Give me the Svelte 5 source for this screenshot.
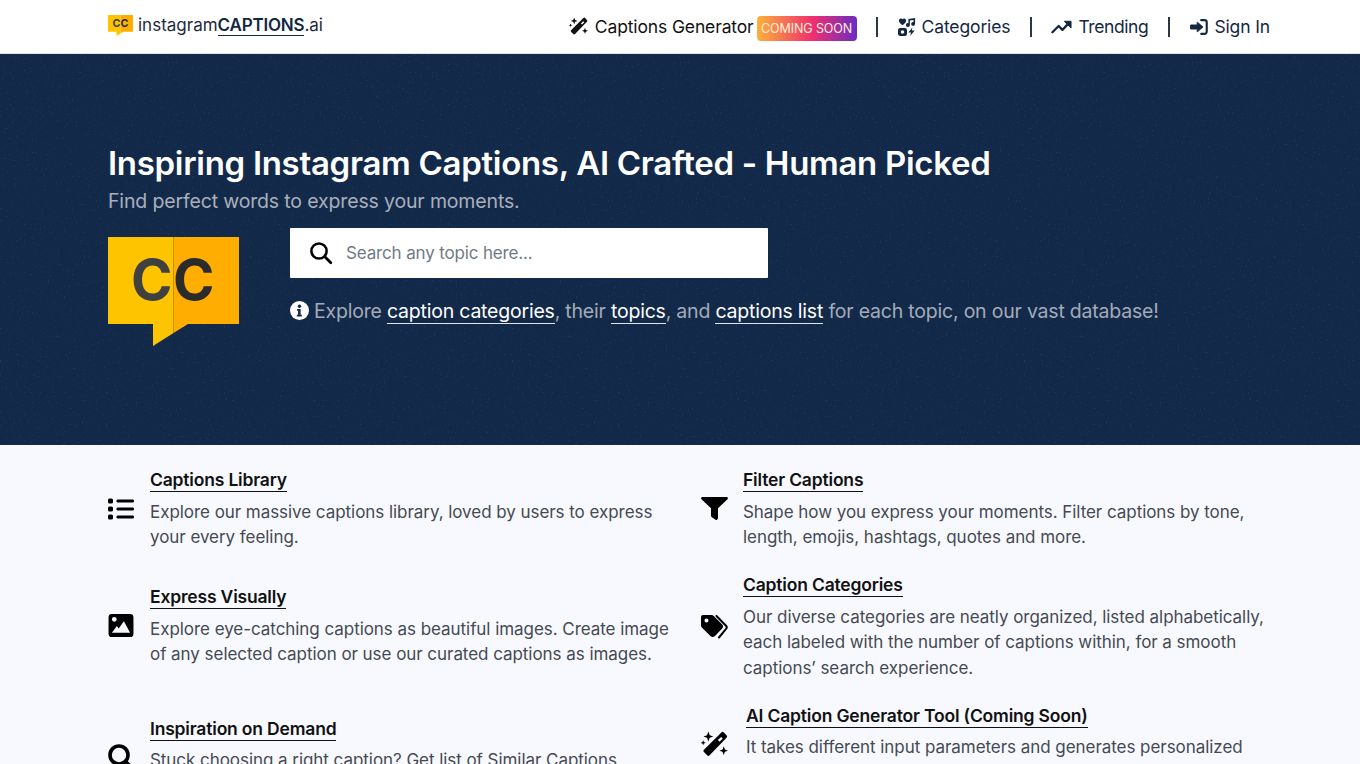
<script>
  const left = [
    { title: 'Captions Library', text: 'Explore our massive captions library, loved by users to express your every feeling.', icon: 'list', cls: 'l1' },
    { title: 'Express Visually', text: 'Explore eye-catching captions as beautiful images. Create image of any selected caption or use our curated captions as images.', icon: 'image', cls: 'l2' },
    { title: 'Inspiration on Demand', text: 'Stuck choosing a right caption? Get list of Similar Captions\nfor any caption you like.', icon: 'search', cls: 'l3' }
  ];
  const right = [
    { title: 'Filter Captions', text: 'Shape how you express your moments. Filter captions by tone, length, emojis, hashtags, quotes and more.', icon: 'filter', cls: 'r1' },
    { title: 'Caption Categories', text: 'Our diverse categories are neatly organized, listed alphabetically, each labeled with the number of captions within, for a smooth captions’ search experience.', icon: 'tags', cls: 'r2' },
    { title: 'AI Caption Generator Tool (Coming Soon)', text: 'It takes different input parameters and generates personalized\ncaptions for you.', icon: 'wand', cls: 'r3' }
  ];
</script>

{#snippet wand()}
  <svg class="ico" viewBox="1 1 22 22" width="19" height="19"><path d="M17.600 2.200a1.400 1.400 0 0 1 2 0l2.200 2.200a1.400 1.400 0 0 1 0 2L8 20.800a1.400 1.400 0 0 1-2 0l-2.600-2.600a1.400 1.400 0 0 1 0-2Zm-.2 3.600-2.600 2.600 1.300 1.300 2.600-2.600Z" fill="currentColor" fill-rule="evenodd"/><path d="M7 1.500l1.100 2.900 2.900 1.100-2.900 1.100L7 9.500 5.900 6.600 3 5.500l2.900-1.100ZM19.500 13.500l1 2.500 2.500 1-2.500 1-1 2.500-1-2.500-2.500-1 2.500-1ZM2.800 8.500l.6 1.500 1.500.6-1.500.6-.6 1.500-.6-1.500-1.500-.6 1.500-.6Z" fill="currentColor"/></svg>
{/snippet}

{#snippet icon(name)}
  {#if name === 'list'}
    <svg class="f-ico" viewBox="0 0 26 22" width="26" height="22"><g fill="currentColor"><rect x="0" y="0.500" width="5" height="5" rx="1.500"/><rect x="0" y="8.500" width="5" height="5" rx="1.500"/><rect x="0" y="16.500" width="5" height="5" rx="1.500"/><rect x="8.500" y="1.500" width="17.500" height="3" rx="1.300"/><rect x="8.500" y="9.500" width="17.500" height="3" rx="1.300"/><rect x="8.500" y="17.500" width="17.500" height="3" rx="1.300"/></g></svg>
  {:else if name === 'image'}
    <svg class="f-ico" viewBox="0 0 26 24" width="26" height="23"><path fill-rule="evenodd" fill="currentColor" d="M3.500 0h19A3.500 3.500 0 0 1 26 3.500v17a3.500 3.500 0 0 1-3.500 3.500h-19A3.500 3.500 0 0 1 0 20.500v-17A3.500 3.500 0 0 1 3.500 0ZM6 3a2.500 2.500 0 1 0 0 5 2.500 2.500 0 0 0 0-5Zm10 4.500L10.600 15 8.700 12.600 3.500 19.500h19Z"/></svg>
  {:else if name === 'search'}
    <svg class="f-ico" viewBox="0 0 26 26" width="26" height="26"><circle cx="11" cy="11" r="9" fill="none" stroke="currentColor" stroke-width="3.600"/><path d="M17.500 17.500 24 24" stroke="currentColor" stroke-width="3.600" stroke-linecap="round"/></svg>
  {:else if name === 'filter'}
    <svg class="f-ico" viewBox="0 0 27 23" width="27" height="23"><path fill="currentColor" d="M1.500 0h24c1.300 0 1.900 1.400 1 2.300L17 11.200V21a1.500 1.500 0 0 1-.6 1.300 1.500 1.500 0 0 1-2.300.2l-3.500-2.500a1.500 1.500 0 0 1-.6-1.200v-7.600L.5 2.300C-.4 1.400.2 0 1.500 0Z"/></svg>
  {:else if name === 'tags'}
    <svg class="f-ico" viewBox="0 0 27 24" width="27" height="24"><path fill="currentColor" fill-rule="evenodd" d="M2 0h8.500c.8 0 1.500.3 2 .8l8.700 8.700c1.100 1.100 1.100 2.900 0 4l-7.500 7.700c-1.100 1.100-2.900 1.100-4 0L.8 12.500c-.5-.5-.8-1.200-.8-2V2a2 2 0 0 1 2-2Zm3.500 3.500a2 2 0 1 0 0 4 2 2 0 0 0 0-4Z"/><path fill="none" stroke="currentColor" stroke-width="2" stroke-linecap="round" d="m15.500 1 9.500 9.700c1.100 1.100 1.100 2.100 0 3.200L18 22.500"/></svg>
  {:else if name === 'wand'}
    <span class="wand-big">{@render wand()}</span>
  {/if}
{/snippet}

{#snippet feature(f)}
  <article class="feature {f.cls}">
    <span class="f-icon">{@render icon(f.icon)}</span>
    <div class="f-body">
      <h3><a href="#top">{f.title}</a></h3>
      <p>{f.text}</p>
    </div>
  </article>
{/snippet}

{#snippet logo(w, h)}
  <svg viewBox="0 0 131 109" width={w} height={h} aria-label="CC logo">
    <defs>
      <clipPath id="cl-{w}"><rect x="0" y="0" width="65.500" height="109"/></clipPath>
      <clipPath id="cr-{w}"><rect x="65.500" y="0" width="65.500" height="109"/></clipPath>
    </defs>
    <path d="M0 0H65.500V96.100L45 109V87H0Z" fill="#ffc400"/>
    <path d="M65.500 0H131V87H80L65.500 96.100Z" fill="#ffae00"/>
    <text class="logo-cc" x="65" y="63" text-anchor="middle" fill="#404040" clip-path="url(#cl-{w})">CC</text>
    <text class="logo-cc" x="65" y="63" text-anchor="middle" fill="#2b2b2b" clip-path="url(#cr-{w})">CC</text>
  </svg>
{/snippet}

<div class="page" id="top">
  <header class="nav">
    <a class="brand" href="#top">
      {@render logo(25, 21)}
      <span class="brand-text">instagram<b>CAPTIONS</b>.ai</span>
    </a>
    <nav class="links">
      <a class="link gen" href="#top">{@render wand()}<span>Captions Generator</span><span class="badge">COMING SOON</span></a>
      <i class="sep"></i>
      <a class="link cats" href="#top">
        <svg class="ico" viewBox="0 0 20 20" width="18" height="18"><g fill="currentColor"><path d="M5 1.300C6 0 8.500.500 9 2.500c.3 1.800-1.500 4-4 5.500-2.500-1.500-4.300-3.700-4-5.500C1.500.500 4 0 5 1.300Z"/><path d="M11.500 1 19 0v6.500a2.200 2.200 0 1 1-1.800-2.100V2.200l-4 .6v5a2.200 2.200 0 1 1-1.700-2.100Z"/><path fill-rule="evenodd" d="M2.500 11h5A2.500 2.500 0 0 1 10 13.500v4A2.500 2.500 0 0 1 7.500 20h-5A2.500 2.500 0 0 1 0 17.500v-4A2.500 2.500 0 0 1 2.500 11Zm2.500 2.500a2 2 0 1 0 0 4 2 2 0 0 0 0-4Z"/><path d="M16 10.500 11.500 16h3l-1 4 5-6h-3.200Z"/></g></svg>
        <span>Categories</span>
      </a>
      <i class="sep sep-b"></i>
      <a class="link trend" href="#top">
        <svg class="ico" viewBox="0 0 22 14" width="21" height="14"><path d="M1.500 12.500 8 6l4 4 7-7.500" fill="none" stroke="currentColor" stroke-width="2.400" stroke-linecap="round" stroke-linejoin="round"/><path d="M14 1h7v7Z" fill="currentColor" stroke="currentColor" stroke-linejoin="round"/></svg>
        <span>Trending</span>
      </a>
      <i class="sep"></i>
      <a class="link" href="#top">
        <svg class="ico" viewBox="0 0 20 18" width="18" height="16"><path d="M8 3.500 14.500 9 8 14.500V11.300H1a1 1 0 0 1-1-1V7.700a1 1 0 0 1 1-1h7Z" fill="currentColor" stroke="currentColor" stroke-linejoin="round"/><path d="M12.500 1.300h3.700a2.500 2.500 0 0 1 2.500 2.500v10.400a2.500 2.500 0 0 1-2.500 2.500h-3.700" fill="none" stroke="currentColor" stroke-width="2.400" stroke-linecap="round"/></svg>
        <span>Sign In</span>
      </a>
    </nav>
  </header>

  <section class="hero">
    <svg class="grain" width="100%" height="100%" aria-hidden="true">
      <filter id="grain"><feTurbulence type="fractalNoise" baseFrequency="0.5" numOctaves="2" seed="4"/><feColorMatrix values="0 0 0 0 0.02  0 0 0 0 0.06  0 0 0 0 0.14  0 0 0 4 -2.55"/></filter>
      <rect width="100%" height="100%" filter="url(#grain)"/>
    </svg>
    <div class="hero-inner">
      <h1>Inspiring Instagram Captions, AI Crafted - Human Picked</h1>
      <p class="sub">Find perfect words to express your moments.</p>
      <div class="hero-row">
        <div class="hero-logo">{@render logo(131, 109)}</div>
        <div class="hero-main">
          <label class="search">
            <svg viewBox="0 0 24 24" width="24" height="24" class="s-ico"><circle cx="10" cy="10" r="7.600" fill="none" stroke="currentColor" stroke-width="2.500"/><path d="m15.800 15.800 6 6" stroke="currentColor" stroke-width="2.800" stroke-linecap="round"/></svg>
            <input type="text" placeholder="Search any topic here..." />
          </label>
          <p class="explore">
            <svg viewBox="0 0 20 20" width="19" height="19" class="i-ico"><circle cx="10" cy="10" r="10" fill="#fff"/><circle cx="10" cy="5.500" r="1.800" fill="#13294a"/><path d="M7.500 8.500h3.700v6h1.300v1.700h-5.300v-1.700h1.300v-4.300H7.500Z" fill="#13294a"/></svg>
            <span>Explore <a href="#top">caption categories</a>, their <a href="#top">topics</a>, and <a href="#top">captions list</a> for each topic, on our vast database!</span>
          </p>
        </div>
      </div>
    </div>
  </section>

  <section class="features">
    <div class="col col-l">
      {#each left as f}{@render feature(f)}{/each}
    </div>
    <div class="col col-r">
      {#each right as f}{@render feature(f)}{/each}
    </div>
  </section>
</div>

<style>
  :global(body) { margin: 0; overflow: hidden; background: #f8f9ff; }
  .page { height: 764px; overflow: hidden; font-family: Inter, "Noto Sans", sans-serif; color: #212529; }
  a { color: inherit; text-decoration: none; }

  .nav { height: 53px; display: flex; align-items: center; justify-content: space-between; padding: 0 90px 0 108px; background: #fff; border-bottom: 1px solid #dbe3ee; }
  .brand { display: flex; align-items: center; gap: 5px; margin-top: -3px; }
  .brand-text { font-size: 17px; letter-spacing: 0; color: #1f2a3a; }
  .brand-text b { font-weight: 600; color: #132743; border-bottom: 1px solid #132743; letter-spacing: -0.2px; }
  .links { display: flex; align-items: center; gap: 20px; color: #132743; }
  .link { display: flex; align-items: center; gap: 6px; font-size: 17.500px; letter-spacing: -0.13px; }
  .trend { letter-spacing: -0.4px; margin-left: -1px; }
  .gen { color: #111; margin-right: -1px; }
  .gen > span:first-of-type { margin-left: 1px; }
  .badge { margin: 4px 0 0 -3px; width: 100px; height: 25px; box-sizing: border-box; display: flex; align-items: center; justify-content: center; border-radius: 4px; font-size: 12.500px; letter-spacing: -0.1px; color: #fff0d8; background: linear-gradient(90deg, #fdb03a, #f0306f 55%, #6a2cc4); }
  .sep { flex: none; width: 2px; height: 20px; background: #2a3748; }
  .ico { flex: none; }

  .hero { position: relative; height: 391px; background: #13294a; }
  .grain { position: absolute; inset: 0; opacity: 0.7; }
  .hero-inner { position: relative; padding: 89px 90px 0 108px; }
  h1 { margin: 0; font-size: 33px; line-height: 40px; font-weight: 600; color: #fff; letter-spacing: -0.3px; }
  .sub { margin: 4px 0 0; font-size: 19.500px; line-height: 28px; color: #a9b0bb; letter-spacing: -0.15px; }
  .hero-row { display: flex; gap: 51px; margin-top: 13px; }
  .hero-logo { padding-top: 9px; }
  .hero-logo svg { display: block; }
  .logo-cc { font-family: Inter, sans-serif; font-weight: 700; font-size: 56px; letter-spacing: 0.5px; }
  .search { width: 478px; height: 50px; box-sizing: border-box; display: flex; align-items: center; gap: 11px; padding-left: 19px; background: #fff; border-radius: 1px; color: #000; }
  .s-ico { flex: none; }
  input { flex: 1; min-width: 0; border: 0; outline: 0; background: none; font: 400 17px Inter, sans-serif; letter-spacing: -0.15px; color: #222; }
  input::placeholder { color: #707a85; opacity: 1; }
  .explore { display: flex; align-items: center; gap: 5px; margin: 19px 0 0; font-size: 19.500px; line-height: 28px; letter-spacing: -0.21px; color: #a3abb8; white-space: nowrap; }
  .i-ico { flex: none; margin-top: -2px; }
  .explore a { color: #fff; border-bottom: 1px solid #dfe6ef; }

  .features { display: flex; gap: 23px; padding: 22px 90px 0 108px; }
  .col { display: flex; flex-direction: column; }
  .col-l { width: 570px; }
  .col-r { width: 569px; }
  .feature { display: flex; align-items: center; }
  .f-icon { flex: none; width: 42px; display: flex; color: #000; }
  .f-ico { display: block; }
  .r3 .f-icon { width: 45px; }
  .f-body { flex: 1; min-width: 0; }
  h3 { margin: 0 0 7.500px; font-size: 17.500px; line-height: 25px; font-weight: 600; color: #111; letter-spacing: -0.18px; }
  h3 a { border-bottom: 1px solid #111; padding-bottom: 1px; }
  .feature p { margin: 0; font-size: 17px; line-height: 25.500px; color: #444a52; letter-spacing: -0.05px; white-space: pre-line; }
  .l1 { margin-bottom: 33.500px; }
  .l2 { margin-bottom: 48px; }
  .r1 { margin-bottom: 21.500px; }
  .r2 { margin-bottom: 21.500px; }
  .wand-big { color: #000; display: block; }
  .wand-big :global(svg) { width: 27px; height: 27px; display: block; }
</style>
